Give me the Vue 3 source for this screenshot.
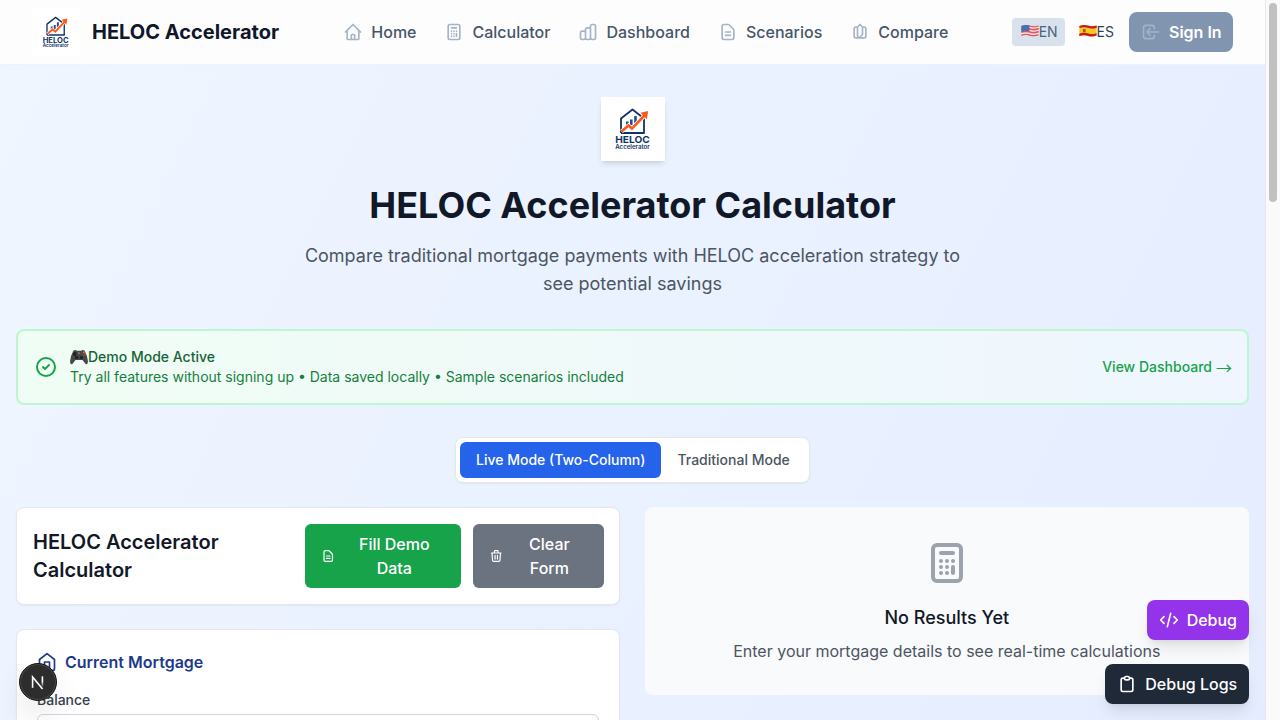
<script setup>
import { h } from 'vue'

const icons = {
  home: 'M3 12l2-2m0 0l7-7 7 7M5 10v10a1 1 0 001 1h3m10-11l2 2m-2-2v10a1 1 0 01-1 1h-3m-6 0a1 1 0 001-1v-4a1 1 0 011-1h2a1 1 0 011 1v4a1 1 0 001 1m-6 0h6',
  calculator: 'M9 7h6m0 10v-3m-3 3h.01M9 17h.01M9 14h.01M12 14h.01M15 11h.01M12 11h.01M9 11h.01M7 21h10a2 2 0 002-2V5a2 2 0 00-2-2H7a2 2 0 00-2 2v14a2 2 0 002 2z',
  chart: 'M9 19v-6a2 2 0 00-2-2H5a2 2 0 00-2 2v6a2 2 0 002 2h2a2 2 0 002-2zm0 0V9a2 2 0 012-2h2a2 2 0 012 2v10m-6 0a2 2 0 002 2h2a2 2 0 002-2m0 0V5a2 2 0 012-2h2a2 2 0 012 2v14a2 2 0 01-2 2h-2a2 2 0 01-2-2z',
  document: 'M9 12h6m-6 4h6m2 5H7a2 2 0 01-2-2V5a2 2 0 012-2h5.586a1 1 0 01.707.293l5.414 5.414a1 1 0 01.293.707V19a2 2 0 01-2 2z',
  compare: 'M9 6H7a2 2 0 00-2 2v9a2 2 0 002 2h10a2 2 0 002-2V8a2 2 0 00-2-2h-2M9 6l3-3 3 3v9l-3 3M9 6v10a3 3 0 003 3',
  login: 'M11 16l-4-4m0 0l4-4m-4 4h14m-5 4v1a3 3 0 01-3 3H6a3 3 0 01-3-3V7a3 3 0 013-3h7a3 3 0 013 3v1',
  check: 'M9 12l2 2 4-4m6 2a9 9 0 11-18 0 9 9 0 0118 0z',
  trash: 'M19 7l-.867 12.142A2 2 0 0116.138 21H7.862a2 2 0 01-1.995-1.858L5 7m5 4v6m4-6v6m1-10V4a1 1 0 00-1-1h-4a1 1 0 00-1 1v3M4 7h16',
  code: 'M10 20l4-16m4 4l4 4-4 4M6 16l-4-4 4-4',
  clipboard: 'M9 5H7a2 2 0 00-2 2v12a2 2 0 002 2h10a2 2 0 002-2V7a2 2 0 00-2-2h-2M9 5a2 2 0 002 2h2a2 2 0 002-2M9 5a2 2 0 012-2h2a2 2 0 012 2',
  house: 'M3 9l9-7 9 7v11a2 2 0 01-2 2H5a2 2 0 01-2-2V9zM9 22V12h6v10'
}
const nav = [
  { label: 'Home', icon: 'home' },
  { label: 'Calculator', icon: 'calculator' },
  { label: 'Dashboard', icon: 'chart' },
  { label: 'Scenarios', icon: 'document' },
  { label: 'Compare', icon: 'compare' }
]

const arrow = 'M20.500 34.500L27.500 28.500L31 31.500L43.500 18.500'
const wordmark = (text, y, size, weight) =>
  h('text', {
    x: 31.5, y, 'text-anchor': 'middle', textLength: 34.5, lengthAdjust: 'spacingAndGlyphs',
    'font-family': 'Inter, sans-serif', 'font-size': size, 'font-weight': weight, fill: '#0f3468'
  }, text)

// House with bars, a rising arrow and the wordmark
const BrandLogo = () =>
  h('svg', { viewBox: '0 0 64 64', fill: 'none' }, [
    h('rect', { width: 64, height: 64, fill: '#fff' }),
    h('path', { d: 'M20 36V21.500L31.500 12.500L43 21.500V36H20', stroke: '#0f3468', 'stroke-width': 1.8, 'stroke-linejoin': 'round' }),
    h('path', { d: 'M25 24.500h2.600v6H25zM29 22.600h2.600v6H29zM33.200 19h2.600v7h-2.600z', fill: '#1d4f91' }),
    h('path', { d: arrow, stroke: '#fff', 'stroke-width': 4.2 }),
    h('path', { d: arrow, stroke: '#fb5a1c', 'stroke-width': 2.6 }),
    h('path', { d: 'M39.500 15.700L47.200 14L45.800 22.200z', fill: '#fb5a1c' }),
    wordmark('HELOC', 46.3, 9.6, 700),
    wordmark('Accelerator', 52.2, 6, 600)
  ])
</script>

<template>
  <div class="window">
    <div class="page">
      <header class="header">
        <div class="brand">
          <BrandLogo class="logo-sm" />
          <span class="brand-name">HELOC Accelerator</span>
        </div>
        <nav class="nav">
          <a v-for="n in nav" :key="n.label" class="nav-item">
            <svg class="icon" viewBox="0 0 24 24"><path :d="icons[n.icon]" /></svg>
            <span>{{ n.label }}</span>
          </a>
        </nav>
        <div class="actions">
          <span class="lang active">
            <svg class="flag" viewBox="0 0 18 14">
              <clipPath id="wave"><path d="M.3 2Q5 .2 9 1.600T17.700 1.500V11.500Q13 13.300 9 11.900T.3 12z" /></clipPath>
              <g clip-path="url(#wave)">
                <rect width="18" height="14" fill="#f6e6e8" />
                <path d="M0 2.200Q5 .5 9 2T18 1.500M0 5.200Q5 3.500 9 5T18 4.500M0 8.200Q5 6.500 9 8T18 7.500M0 11.400Q5 9.700 9 11.200T18 10.700" fill="none" stroke="#e0555f" stroke-width="1.700" />
                <path d="M0 0H8.500V7.300Q5 6.500 0 8z" fill="#4a6fae" />
              </g>
            </svg>EN
          </span>
          <span class="lang">
            <svg class="flag" viewBox="0 0 18 14">
              <g clip-path="url(#wave)">
                <rect width="18" height="14" fill="#f8c81c" />
                <path d="M0 2.500Q5 .8 9 2.300T18 2M0 11.500Q5 9.500 9 11T18 10.700" fill="none" stroke="#c5192d" stroke-width="3.200" />
                <path d="M4 5h2.600v3.200H4z" fill="#a8571f" />
              </g>
            </svg>ES
          </span>
          <button class="signin">
            <svg class="icon" viewBox="0 0 24 24"><path :d="icons.login" /></svg>Sign In
          </button>
        </div>
      </header>

      <main class="main">
        <section class="hero">
          <BrandLogo class="logo" />
          <h1>HELOC Accelerator Calculator</h1>
          <p>Compare traditional mortgage payments with HELOC acceleration strategy to see potential savings</p>
        </section>

        <section class="demo">
          <svg class="check" viewBox="0 0 24 24"><path :d="icons.check" /></svg>
          <div class="demo-text">
            <strong>
              <svg class="pad" viewBox="0 0 18 16">
                <path d="M3.500 1.500Q5.500 .3 7 1.800H11Q12.500 .3 14.500 1.500Q17.600 7 18 12.500Q17.800 15.600 15.800 15.200L12.500 11H5.500L2.200 15.200Q.2 15.600 0 12.500Q.4 7 3.500 1.500z" fill="#48484a" />
                <circle cx="4.800" cy="5" r="1.900" fill="#222" /><circle cx="6.600" cy="8.400" r="1.700" fill="#242426" /><circle cx="11.400" cy="8.400" r="1.700" fill="#242426" />
                <circle cx="13.700" cy="3.300" r=".8" fill="#d89b2b" /><circle cx="15.200" cy="4.700" r=".9" fill="#e2402c" /><circle cx="12.300" cy="4.800" r=".8" fill="#8c3a30" /><circle cx="13.700" cy="6.200" r=".8" fill="#55734a" />
                <circle cx="9" cy="4.200" r=".9" fill="#8b8b8e" />
              </svg>Demo Mode Active
            </strong>
            <span>Try all features without signing up • Data saved locally • Sample scenarios included</span>
          </div>
          <a class="demo-link">View Dashboard <span class="arrow">→</span></a>
        </section>

        <div class="toggle">
          <button class="on">Live Mode (Two-Column)</button>
          <button>Traditional Mode</button>
        </div>

        <div class="columns">
          <div class="left">
            <section class="card form-head">
              <h2>HELOC Accelerator Calculator</h2>
              <div class="form-actions">
                <button class="fill">
                  <svg viewBox="0 0 24 24"><path :d="icons.document" /></svg>
                  <span>Fill Demo Data</span>
                </button>
                <button class="clear">
                  <svg viewBox="0 0 24 24"><path :d="icons.trash" /></svg>
                  <span>Clear Form</span>
                </button>
              </div>
            </section>
            <section class="card mortgage">
              <h3><svg class="icon" viewBox="0 0 24 24"><path :d="icons.house" /></svg>Current Mortgage</h3>
              <label>Balance</label>
              <div class="field"></div>
            </section>
          </div>
          <section class="results">
            <svg viewBox="0 0 24 24"><path :d="icons.calculator" /></svg>
            <h3>No Results Yet</h3>
            <p>Enter your mortgage details to see real-time calculations</p>
          </section>
        </div>
      </main>
    </div>

    <div class="scrollbar"><div class="thumb"></div></div>

    <div class="floating">
      <button class="debug"><svg class="icon" viewBox="0 0 24 24"><path :d="icons.code" /></svg>Debug</button>
      <button class="logs"><svg class="icon" viewBox="0 0 24 24"><path :d="icons.clipboard" /></svg>Debug Logs</button>
    </div>

    <div class="badge">
      <svg viewBox="0 0 38 38">
        <defs>
          <linearGradient id="fade" x1="0" y1="0" x2="0" y2="1"><stop offset=".5" stop-color="#fff" /><stop offset="1" stop-color="#fff" stop-opacity=".1" /></linearGradient>
        </defs>
        <path d="M13.300 25V13.800L23.800 26.500" fill="none" stroke="#fff" stroke-width="1.700" />
        <rect x="22.800" y="13" width="1.700" height="11" fill="url(#fade)" />
      </svg>
    </div>
  </div>
</template>

<style>
html, body { margin: 0; height: 720px; overflow: hidden; }
</style>

<style scoped>
.window { position: relative; display: flex; width: 1280px; height: 720px; overflow: hidden; font-family: Inter, "Liberation Sans", sans-serif; font-size: 16px; line-height: 24px; color: #111827; }
.window * { box-sizing: border-box; }
h1, h2, h3, p { margin: 0; }
button { font: inherit; border: 0; padding: 0; color: inherit; background: none; }
svg { display: block; flex-shrink: 0; fill: none; }
.icon { width: 20px; height: 20px; }
.icon path, .check path, .results path, .form-actions path { stroke: currentColor; stroke-width: 2; stroke-linecap: round; stroke-linejoin: round; }
.page { width: 1265px; height: 720px; overflow: hidden; background: linear-gradient(to bottom right, #eff6ff, #e0e7ff) 0 0 / 1265px 2590px no-repeat; }
.header { height: 65px; padding: 0 32px; display: flex; align-items: center; background: #fdfdfe; border-bottom: 1px solid #eef2f9; }
.brand { display: flex; align-items: center; gap: 12px; width: 303px; }
.logo-sm { display: block; flex-shrink: 0; width: 48px; height: 48px; }
.brand-name { font-size: 20px; line-height: 28px; font-weight: 700; color: #0f172a; white-space: nowrap; }
.nav { display: flex; margin-left: 8.3px; gap: 28px; }
.nav-item { display: flex; align-items: center; gap: 8px; font-weight: 500; color: #475569; }
.nav-item .icon { color: #a6b4c8; }
.actions { margin-left: auto; display: flex; align-items: center; }
.lang { display: flex; align-items: center; height: 28px; padding: 0 7.500px 0 8.500px; margin-right: 5px; font-size: 14px; line-height: 20px; color: #334155; border-radius: 4px; }
.lang.active { background: #d9e2ec; color: #486581; }
.flag { width: 18px; height: 14px; margin-bottom: 2px; }
.signin { display: flex; align-items: center; gap: 8px; width: 104px; height: 40px; padding: 0 0 0 12px; margin-left: 2.5px; border-radius: 8px; background: #8295b0; color: #fff; font-weight: 600; white-space: nowrap; }
.signin .icon { color: #a3b2c7; }
.main { padding: 32px 16px 0; }
.hero { display: flex; flex-direction: column; align-items: center; text-align: center; }
.logo { display: block; flex-shrink: 0; width: 64px; height: 64px; box-shadow: 0 4px 6px -1px rgba(0,0,0,.1), 0 2px 4px -2px rgba(0,0,0,.1); }
h1 { margin-top: 24px; font-size: 36px; line-height: 40px; font-weight: 700; }
.hero p { margin-top: 17px; width: 672px; font-size: 18px; line-height: 28px; color: #4b5563; }
.demo { margin-top: 31px; height: 76px; padding: 0 16px; display: flex; align-items: center; border: 2px solid #bbf7d0; border-radius: 8px; background: linear-gradient(to right, #f0fdf4, #eff6ff); }
.check { width: 24px; height: 24px; color: #16a34a; }
.demo-text { margin-left: 12px; display: flex; flex-direction: column; font-size: 14px; line-height: 20px; color: #15803d; }
.demo-text strong { display: flex; align-items: center; font-weight: 500; color: #166534; }
.pad { width: 18px; height: 16px; }
.demo-link { margin-left: auto; display: flex; align-items: center; gap: 4px; font-size: 14px; line-height: 20px; font-weight: 500; color: #16a34a; }
.arrow { margin-right: -1px; font-family: "Noto Sans CJK SC", sans-serif; font-size: 16px; font-weight: 400; line-height: 20px; }
.toggle { width: 355px; height: 46px; margin: 32px auto 0; padding: 4px; display: flex; border: 1px solid #e5e7eb; border-radius: 8px; background: #fff; box-shadow: 0 1px 2px rgba(0,0,0,.05); font-size: 14px; font-weight: 500; color: #4b5563; white-space: nowrap; }
.toggle button { height: 36px; padding: 0 16px; border-radius: 6px; }
.toggle .on { background: #2563eb; color: #fff; }
.columns { margin-top: 24px; display: grid; grid-template-columns: 604.3px 1fr; gap: 24.300px; align-items: start; }
.left { display: flex; flex-direction: column; gap: 24px; }
.card { background: #fff; border: 1px solid #e5e7eb; border-radius: 8px; box-shadow: 0 1px 2px rgba(0,0,0,.05); }
.form-head { height: 98px; padding: 16px 15.700px 16px 16px; display: flex; align-items: center; justify-content: space-between; }
h2 { width: 210px; font-size: 20px; line-height: 28px; font-weight: 600; }
.form-actions { display: flex; gap: 12px; color: #fff; font-weight: 500; }
.form-actions button { height: 64px; padding: 0 16px; display: flex; align-items: center; gap: 8px; border-radius: 6px; }
.form-actions svg { width: 14.5px; height: 16px; }
.form-actions .fill { width: 155.200px; background: #16a34a; }
.form-actions .clear { width: 131px; background: #6b7280; }
.form-actions span { flex: 1; text-align: center; }
.mortgage { height: 300px; padding: 20px; }
.mortgage h3 { display: flex; align-items: center; gap: 8px; font-size: 16px; font-weight: 600; color: #1e3a8a; }
.mortgage label { display: block; margin-top: 16px; font-size: 14px; line-height: 20px; font-weight: 500; color: #374151; }
.field { margin-top: 4px; height: 42px; border: 1px solid #d1d5db; border-radius: 6px; }
.results { height: 188px; padding-top: 32px; display: flex; flex-direction: column; align-items: center; background: #f9fafb; border-radius: 8px; }
.results svg { width: 48px; height: 48px; color: #9ca3af; }
.results h3 { margin-top: 17px; font-size: 18px; line-height: 28px; font-weight: 500; }
.results p { margin-top: 7px; color: #4b5563; }
.scrollbar { width: 15px; height: 720px; padding: 2px 0 0 3px; background: #fafafa; border-left: 1px solid #e8e8e8; }
.thumb { width: 8px; height: 199px; margin-top: 1px; border-radius: 4px; background: #c1c1c1; }
.floating { position: absolute; right: 31px; bottom: 16px; display: flex; flex-direction: column; align-items: flex-end; gap: 24px; color: #fff; font-weight: 500; }
.floating button { height: 40px; padding: 0 12px; display: flex; align-items: center; gap: 8px; border-radius: 8px; box-shadow: 0 10px 15px -3px rgba(0,0,0,.1), 0 4px 6px -4px rgba(0,0,0,.1); }
.debug { background: #9333ea; }
.floating .logs { padding-right: 11.8px; background: #1f2937; }
.badge { position: absolute; left: 19px; top: 663px; width: 38px; height: 38px; border-radius: 50%; background: #2d2d2d; border: 1px solid #171717; box-shadow: inset 0 0 0 1px #494949, 0 16px 32px -8px rgba(0,0,0,.24); }
.badge svg { width: 36px; height: 36px; }
</style>
